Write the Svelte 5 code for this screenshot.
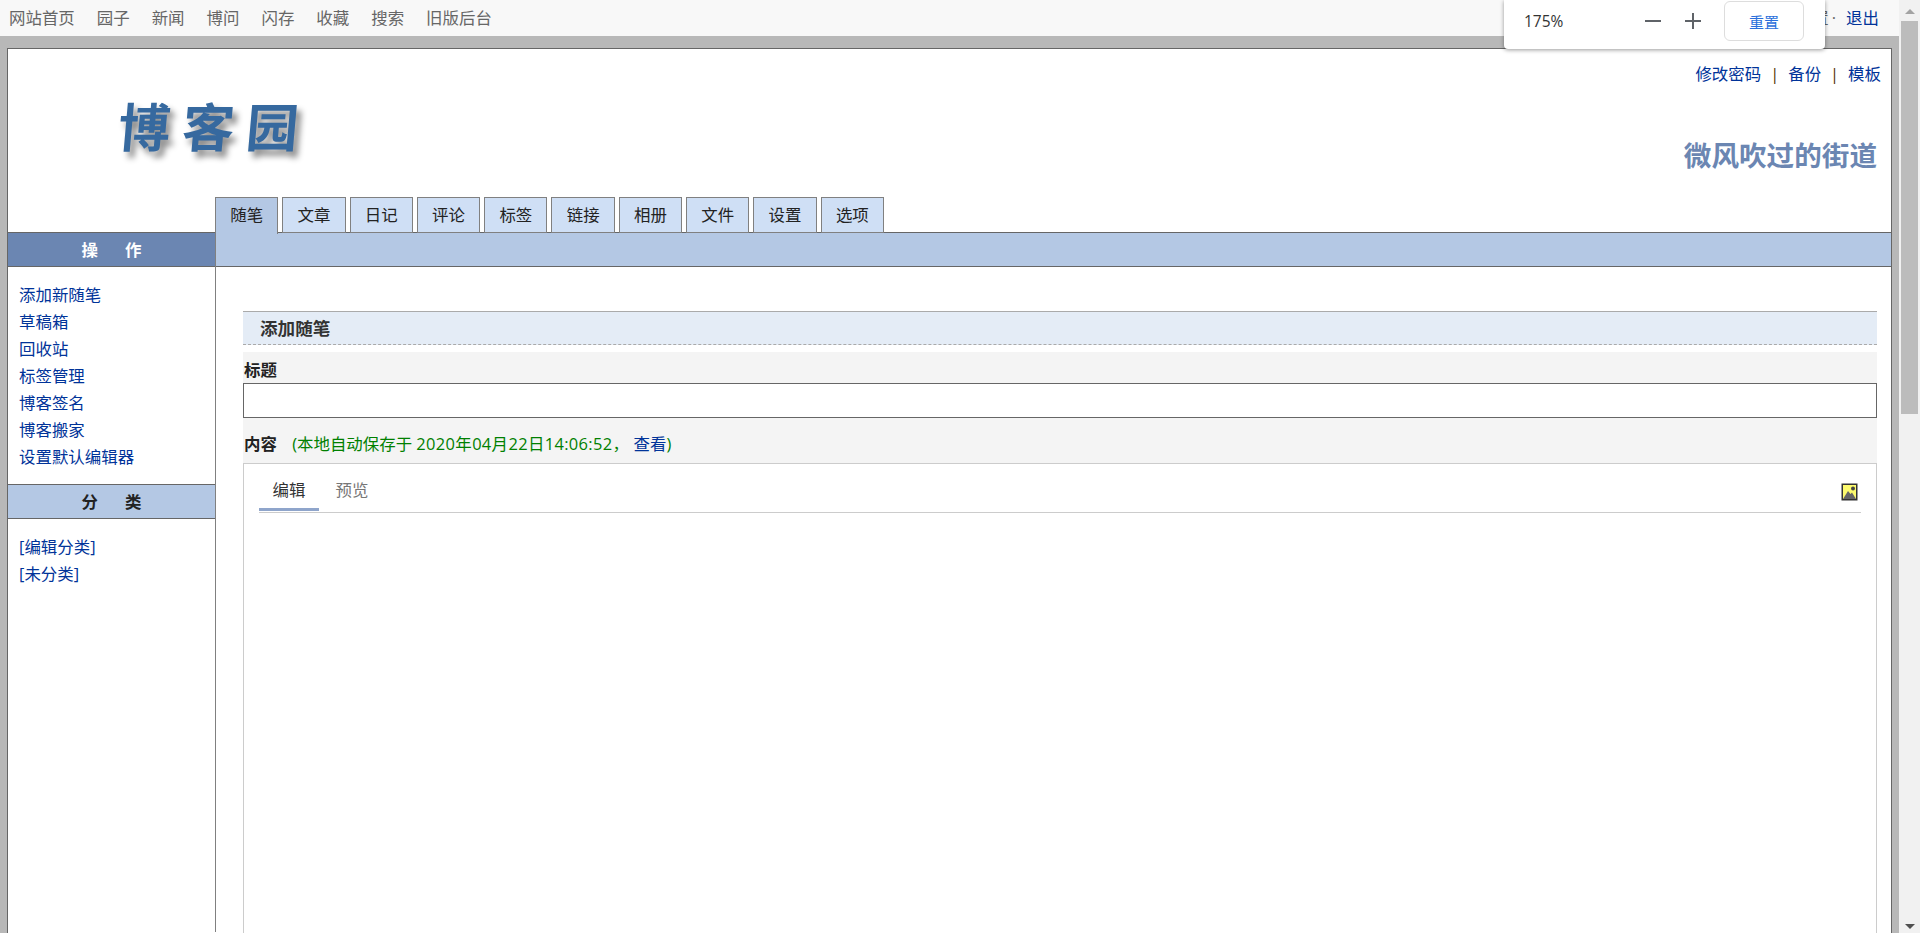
<script lang="ts">
  const navLinks = ['网站首页', '园子', '新闻', '博问', '闪存', '收藏', '搜索', '旧版后台'];
  const tabs = ['随笔', '文章', '日记', '评论', '标签', '链接', '相册', '文件', '设置', '选项'];
  const actions = ['添加新随笔', '草稿箱', '回收站', '标签管理', '博客签名', '博客搬家', '设置默认编辑器'];
  const categories = ['[编辑分类]', '[未分类]'];
</script>

<div class="window">
  <div class="viewport">
    <nav class="topbar">
      <div class="topbar-links">
        {#each navLinks as link}
          <a href="#top">{link}</a>
        {/each}
      </div>
      <div class="topbar-user">
        <a href="#top" class="muted">设置</a><span class="dot">·</span><a href="#top">退出</a>
      </div>
    </nav>

    <div class="box">
      <header class="header">
        <div class="header-top">
          <div class="logo">博客园</div>
          <div class="header-right">
            <div class="header-links">
              <a href="#top">修改密码</a><span class="sep">|</span><a href="#top">备份</a><span class="sep">|</span><a href="#top">模板</a>
            </div>
            <div class="blog-title">微风吹过的街道</div>
          </div>
        </div>
        <div class="tabs">
          {#each tabs as tab, i}
            <a href="#top" class="tab" class:active={i === 0}>{tab}</a>
          {/each}
        </div>
      </header>

      <div class="columns">
        <aside class="sidebar">
          <div class="side-title dark">操作</div>
          <ul class="side-list">
            {#each actions as item}
              <li><a href="#top">{item}</a></li>
            {/each}
          </ul>
          <div class="side-title light">分类</div>
          <ul class="side-list">
            {#each categories as item}
              <li><a href="#top">{item}</a></li>
            {/each}
          </ul>
        </aside>

        <main class="content">
          <div class="subbar"></div>
          <section class="form">
            <h2 class="form-title">添加随笔</h2>
            <div class="fields">
              <div class="label">标题</div>
              <input class="title-input" type="text" aria-label="标题" />
              <div class="label content-label">
                内容
                <span class="autosave">(本地自动保存于 <span class="stamp">2020年04月22日14:06:52，</span> <a href="#top">查看</a>)</span>
              </div>
              <div class="editor">
                <div class="editor-tabs">
                  <span class="editor-tab active">编辑</span>
                  <span class="editor-tab">预览</span>
                  <svg class="image-icon" viewBox="0 0 17 18" width="17" height="18" aria-hidden="true">
                    <rect x="0.5" y="0.5" width="16" height="17" fill="#333" />
                    <rect x="2" y="2" width="13" height="14" fill="#fdfb6e" />
                    <circle cx="12" cy="5.5" r="2" fill="#444" />
                    <path d="M2 16 L7 8 L9.5 11 L11 9.5 L15 16 Z" fill="#666" />
                  </svg>
                </div>
              </div>
            </div>
          </section>
        </main>
      </div>
    </div>
  </div>

  <div class="scrollbar">
    <span class="arrow up"></span>
    <div class="thumb"></div>
    <span class="arrow down"></span>
  </div>

  <div class="zoom-popup">
    <span class="zoom-value">175%</span>
    <button class="zoom-btn" aria-label="缩小">
      <svg viewBox="0 0 16 16" width="16" height="16"><path d="M0 8h16" stroke="#5f6368" stroke-width="2" /></svg>
    </button>
    <button class="zoom-btn" aria-label="放大">
      <svg viewBox="0 0 16 16" width="16" height="16"><path d="M0 8h16M8 0v16" stroke="#5f6368" stroke-width="2" /></svg>
    </button>
    <button class="zoom-reset">重置</button>
  </div>
</div>

<style>
  :global(body) {
    margin: 0;
    overflow: hidden;
  }
  .window {
    position: relative;
    display: flex;
    height: 933px;
    overflow: hidden;
    font-family: "Open Sans", "Noto Sans CJK SC", sans-serif;
    font-size: 16.45px;
    color: #333;
  }
  a {
    color: #039;
    text-decoration: none;
  }
  .viewport {
    flex: 1;
    min-width: 0;
    background: #b8b8b8;
  }
  .topbar {
    display: flex;
    justify-content: space-between;
    align-items: center;
    height: 36px;
    padding: 0 20px 2px 9px;
    box-sizing: border-box;
    background: #f8f8f8;
  }
  .topbar-links {
    display: flex;
    gap: 22px;
  }
  .topbar-links a,
  .topbar-user .muted {
    color: #666;
  }
  .dot {
    margin: 0 10px 0 3px;
    color: #666;
  }
  .box {
    height: 885px;
    margin: 12px 7px 0;
    border: 1px solid #666;
    border-bottom: 0;
    background: #fff;
  }
  .header {
    height: 183px;
    display: flex;
    flex-direction: column;
    justify-content: space-between;
  }
  .header-top {
    display: flex;
    justify-content: space-between;
  }
  .logo {
    margin: 44px 0 0 110px;
    font-size: 52px;
    line-height: 68px;
    font-weight: 700;
    letter-spacing: 12px;
    color: #36699f;
    text-shadow: 5px 6px 6px #888;
    transform: skewX(-5deg);
  }
  .header-right {
    padding: 10px 10px 0 0;
    text-align: right;
  }
  .header-links {
    line-height: 30px;
  }
  .sep {
    margin: 0 9px;
    color: #530;
  }
  .blog-title {
    margin: 46px 4px 0 0;
    font-size: 27.6px;
    line-height: 40px;
    font-weight: 700;
    color: #6b86b2;
  }
  .tabs {
    display: flex;
    gap: 4px;
    margin: 0 0 -1px 207px;
    position: relative;
  }
  .tab {
    box-sizing: border-box;
    width: 63.3px;
    height: 36px;
    line-height: 33px;
    text-align: center;
    border: 1px solid #808080;
    background: #cfdff5;
    color: #222;
  }
  .tab.active {
    height: 37px;
    background: #b4c8e4;
    border-bottom: 0;
    margin-bottom: -1px;
    position: relative;
    z-index: 1;
  }
  .columns {
    display: flex;
    height: 700px;
  }
  .sidebar {
    flex: 0 0 207px;
  }
  .side-title {
    box-sizing: border-box;
    height: 35px;
    padding-left: 27px;
    line-height: 33px;
    font-weight: 700;
    letter-spacing: 27px;
    text-align: center;
    border-top: 1px solid #666;
    border-bottom: 1px solid #666;
  }
  .side-title.dark {
    background: #6b86b2;
    color: #fff;
  }
  .side-title.light {
    background: #b4c8e4;
    color: #222;
  }
  .side-list {
    list-style: none;
    margin: 0;
    padding: 14px 0 14px 11px;
  }
  .side-list li {
    height: 27px;
    line-height: 27px;
  }
  .content {
    flex: 1;
    min-width: 0;
    border-left: 1px solid #808080;
  }
  .subbar {
    box-sizing: border-box;
    height: 35px;
    background: #b4c8e4;
    border-top: 1px solid #666;
    border-bottom: 1px solid #666;
  }
  .form {
    margin: 44px 14px 0 27px;
  }
  .form-title {
    box-sizing: border-box;
    height: 34px;
    margin: 0;
    padding-left: 17px;
    font-size: 17.6px;
    line-height: 33px;
    background: #e4ecf6;
    border-top: 1px solid #aaa;
    border-bottom: 1px dashed #aaa;
  }
  .fields {
    margin-top: 7px;
    background: #f4f4f4;
  }
  .label {
    padding: 4px 0 0 1px;
    font-weight: 700;
    line-height: 27px;
    color: #222;
  }
  .title-input {
    display: block;
    box-sizing: border-box;
    width: 100%;
    height: 35px;
    margin: 0;
    border: 1px solid #666;
    background: #fff;
  }
  .content-label {
    height: 35px;
    padding-top: 10px;
    line-height: 32px;
  }
  .autosave {
    margin-left: 11px;
    font-weight: 400;
    color: #008000;
  }
  .stamp {
    letter-spacing: 0.35px;
  }
  .editor {
    box-sizing: border-box;
    height: 500px;
    padding: 0 15px;
    background: #fff;
    border: 1px solid #ccc;
  }
  .editor-tabs {
    display: flex;
    align-items: flex-start;
    height: 48px;
    border-bottom: 1px solid #ccc;
  }
  .editor-tab {
    box-sizing: border-box;
    width: 60px;
    height: 47px;
    line-height: 52px;
    text-align: center;
    color: #777;
  }
  .editor-tab.active {
    color: #333;
    border-bottom: 3px solid #8fa5cb;
    margin-right: 3px;
  }
  .image-icon {
    margin: 19px 3px 0 auto;
  }
  .scrollbar {
    flex: 0 0 21px;
    display: flex;
    flex-direction: column;
    align-items: center;
    background: #f1f1f1;
  }
  .thumb {
    box-sizing: border-box;
    width: 17px;
    height: 393px;
    background: #bcbcbc;
  }
  .arrow {
    width: 0;
    height: 0;
    border-left: 5px solid transparent;
    border-right: 5px solid transparent;
  }
  .arrow.up {
    margin: 9px 0 7px;
    border-bottom: 5px solid #a3a3a3;
  }
  .arrow.down {
    margin-top: auto;
    margin-bottom: 4px;
    border-top: 5px solid #505050;
  }
  .zoom-popup {
    position: absolute;
    top: 0;
    left: 1504px;
    width: 321px;
    height: 49px;
    box-sizing: border-box;
    display: flex;
    align-items: center;
    padding: 0 21px 7px 20px;
    background: #fff;
    border-radius: 0 0 4px 4px;
    box-shadow: 0 1px 4px rgba(0, 0, 0, 0.4);
  }
  .zoom-value {
    flex: 1;
    font-size: 15.5px;
    color: #333;
  }
  .zoom-btn {
    display: flex;
    padding: 0;
    margin-right: 24px;
    border: 0;
    background: none;
  }
  .zoom-reset {
    width: 80px;
    height: 40px;
    margin-left: -1px;
    font: inherit;
    font-size: 15px;
    color: #2a6fdb;
    background: #fff;
    border: 1px solid #ddd;
    border-radius: 6px;
  }
</style>
